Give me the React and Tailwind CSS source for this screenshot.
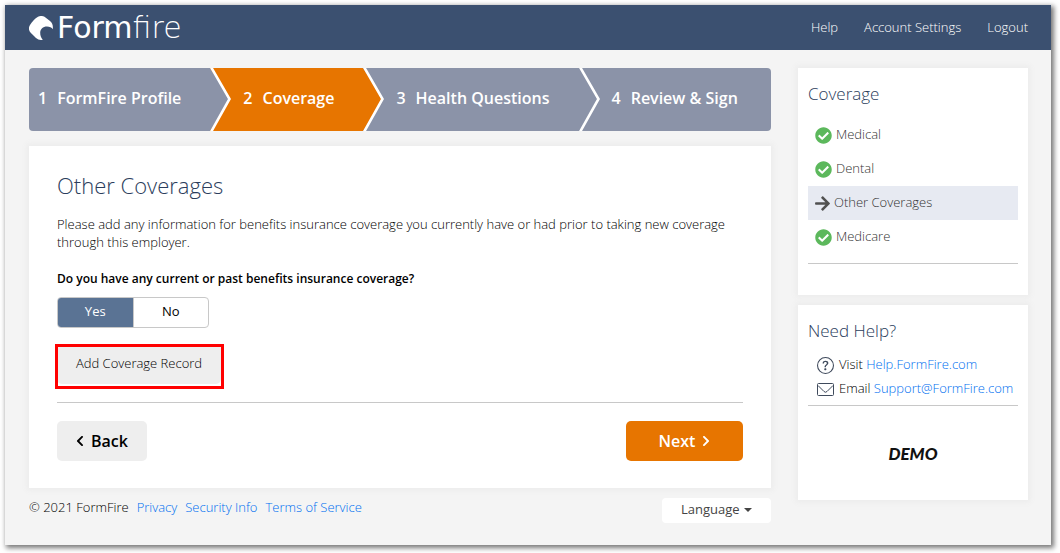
import { useState } from 'react';
import { FaCheckCircle, FaArrowRight, FaChevronLeft, FaChevronRight } from 'react-icons/fa';
import { BsQuestionCircle } from 'react-icons/bs';

const steps = [
  { number: 1, label: 'FormFire Profile' },
  { number: 2, label: 'Coverage', active: true },
  { number: 3, label: 'Health Questions' },
  { number: 4, label: 'Review & Sign' }
];

const coverages = [
  { label: 'Medical' },
  { label: 'Dental' },
  { label: 'Other Coverages', current: true },
  { label: 'Medicare' }
];

const stepFill = (step) => (step.active ? '#e77500' : '#8b93a8');

const Logo = () => (
  <a href="#" className="flex items-center gap-1 text-white">
    <svg viewBox="0 0 24 24" className="w-6 h-6" fill="currentColor" aria-hidden="true">
      <path d="M9 0.8C11-0.3 13.500-0.300 15.500 0.800L21 5C23.300 7 24.200 9.500 23.800 13.200C22.800 11.300 20.600 10.500 18 10.500C13.900 10.500 11.200 13 11.200 16.800C11.200 19.600 12 21.900 13.800 23.700C11.300 24.300 9 23.700 7 22L1.700 16.800C-0.500 14.500-0.600 11.500 1 9C3.200 5.700 5.900 2.700 9 0.800z" />
    </svg>
    <span className="font-['DejaVu_Sans'] font-normal text-[30px] leading-[30px]">
      Form<span className="font-extralight">fire</span>
    </span>
  </a>
);

// Arrow-shaped divider, filled with the colours of its two neighbours
const StepDivider = ({ left, right }) => (
  <svg viewBox="0 0 21 63" preserveAspectRatio="none" className="w-[21px] h-[63px] shrink-0" aria-hidden="true">
    <rect width="21" height="63" fill={right} />
    <path d="M0 0L20 31L0 63z" fill={left} />
    <path d="M1 -1L19.500 31L1 64" fill="none" stroke="#fff" strokeWidth="2.600" />
  </svg>
);

const Steps = () => (
  <nav className="flex rounded overflow-hidden bg-[#8b93a8] text-white">
    {steps.map((step, index) => (
      <div key={step.number} className="flex last:flex-1">
        {index > 0 && <StepDivider left={stepFill(steps[index - 1])} right={stepFill(step)} />}
        <a
          href="#"
          className={`flex items-center gap-2.5 h-[63px] pr-[29px] pb-[3px] text-base font-semibold whitespace-nowrap ${index > 0 ? 'pl-3' : 'pl-[9px]'} ${step.active ? 'bg-[#e77500]' : ''}`}
        >
          <span>{step.number}</span>
          <span>{step.label}</span>
        </a>
      </div>
    ))}
  </nav>
);

const YesNo = () => {
  const [answer, setAnswer] = useState('Yes');

  return (
    <fieldset>
      <legend className="pt-[19px] text-[12px] leading-[18px] font-semibold">
        Do you have any current or past benefits insurance coverage?
      </legend>
      <div className="mt-[9px] inline-flex h-[31px] w-[152px] rounded border border-[#c8c8c8] overflow-hidden align-top">
        {['Yes', 'No'].map((option) => (
          <label
            key={option}
            className="flex flex-1 items-center justify-center pb-0.5 cursor-pointer text-[13px] font-normal border-r border-[#c8c8c8] last:border-r-0 has-checked:bg-[#5a7394] has-checked:text-white"
          >
            <input
              type="radio"
              name="has-coverage"
              className="sr-only"
              checked={answer === option}
              onChange={() => setAnswer(option)}
            />
            {option}
          </label>
        ))}
      </div>
    </fieldset>
  );
};

const Footer = () => (
  <footer className="mt-2.5 flex items-start justify-between">
    <div className="flex gap-2 leading-[18px]">
      <span>© 2021 FormFire</span>
      <a href="#" className="text-[#006ff0]">Privacy</a>
      <a href="#" className="text-[#006ff0]">Security Info</a>
      <a href="#" className="text-[#006ff0]">Terms of Service</a>
    </div>
    <div className="relative">
      <select
        aria-label="Language"
        className="appearance-none w-[109px] h-[25px] pl-[19px] pb-0.5 rounded bg-white text-[#444] text-[13px] font-normal"
      >
        <option>Language</option>
      </select>
      <svg viewBox="0 0 8 4" className="absolute right-[19px] top-2.5 w-2 h-1 pointer-events-none" aria-hidden="true">
        <path d="M0 0h8L4 4z" fill="#444" />
      </svg>
    </div>
  </footer>
);

const Sidebar = () => (
  <aside className="w-[230px] shrink-0 space-y-2.5">
    <section className="bg-white px-2.5 pt-3.5 pb-[31px] shadow-[0_0_6px_2px_#ebebeb]">
      <h2 className="text-[17px] leading-6 text-[#2b3d5c]">Coverage</h2>
      <ul className="mt-3">
        {coverages.map((item) => (
          <li key={item.label} className={item.current ? 'bg-[#e7eaf2]' : ''}>
            <a href="#" className="flex items-center gap-1 h-[34px] pl-[7px] text-[#333]">
              {item.current
                ? <FaArrowRight className="w-[15px] h-[17px] text-[#505050]" />
                : <FaCheckCircle className="w-[17px] h-[17px] text-[#5cb85c]" />}
              {item.label}
            </a>
          </li>
        ))}
      </ul>
      <hr className="mt-[9px] border-[#c8c8c8]" />
    </section>

    <section className="bg-white px-2.5 pt-3.5 pb-[34px] shadow-[0_0_6px_2px_#ebebeb]">
      <h2 className="text-[17px] leading-6 text-[#2b3d5c]">Need Help?</h2>
      <ul className="mt-2.5 pl-[9px]">
        <li className="flex items-center gap-[5px] h-6">
          <BsQuestionCircle className="w-[17px] h-[17px] text-[#3f4a5c]" />
          <span>Visit <a href="#" className="text-[#006ff0]">Help.FormFire.com</a></span>
        </li>
        <li className="flex items-center gap-[5px] h-6">
          <svg viewBox="0 0 17 13" className="w-[17px] h-[13px] shrink-0" fill="none" stroke="#3f4a5c" aria-hidden="true">
            <rect x="0.500" y="0.500" width="16" height="12" rx="1" />
            <path d="M1 2.500L7 8.500Q8.500 10 10 8.500L16 2.500" />
          </svg>
          <span>Email <a href="#" className="text-[#006ff0]">Support@FormFire.com</a></span>
        </li>
      </ul>
      <hr className="mt-1 border-[#c8c8c8]" />
      <p className="mt-9 text-center font-['Lato'] font-black italic text-[17px] leading-6 text-[#111]">DEMO</p>
    </section>
  </aside>
);

export default function App() {
  return (
    <div className="bg-white pt-[5px] pl-[5px] pr-[9px] pb-2 font-['Open_Sans',sans-serif] text-[13px] font-light text-black">
      <div className="bg-[#f4f4f4] shadow-[2px_2px_5px_1px_#777]">
        <header className="flex items-center justify-between h-[45px] pl-6 pr-[23px] bg-[#3b5070]">
          <Logo />
          <nav className="flex gap-[26px] text-white">
            <a href="#">Help</a>
            <a href="#">Account Settings</a>
            <a href="#">Logout</a>
          </nav>
        </header>

        <div className="flex items-start gap-[27px] pt-[18px] pl-6 pr-[23px] pb-[22px]">
          <main className="flex-1 min-w-0">
            <Steps />

            <section className="mt-[15px] bg-white px-7 pt-[26px] pb-[27px] shadow-[0_0_6px_2px_#ebebeb]">
              <h1 className="text-[22px] leading-[26px] text-[#2b3d5c]">Other Coverages</h1>
              <p className="mt-[17px] leading-[18px]">
                Please add any information for benefits insurance coverage you currently have or had prior to taking new coverage through this employer.
              </p>

              <YesNo />

              <div className="relative mt-4 w-fit">
                <button type="button" className="block h-10 w-[164px] rounded-[5px] bg-[#eee] text-[13px] text-black">
                  Add Coverage Record
                </button>
                <span className="absolute -left-0.5 -right-[3px] top-0 h-[45px] border-3 border-[#ff0000] pointer-events-none" />
              </div>

              <hr className="mt-[18px] border-[#c8c8c8]" />

              <div className="mt-[18px] flex justify-between text-[17px] font-semibold">
                <button type="button" className="flex items-center justify-center gap-[7px] w-[90px] h-10 rounded-[5px] bg-[#eee] text-base text-black">
                  <FaChevronLeft className="w-2 h-3" />
                  Back
                </button>
                <button type="button" className="flex items-center justify-center gap-[7px] w-[117px] h-10 rounded-[5px] bg-[#e77500] text-base text-white">
                  Next
                  <FaChevronRight className="w-2 h-3" />
                </button>
              </div>
            </section>

            <Footer />
          </main>

          <Sidebar />
        </div>
      </div>
    </div>
  );
}
